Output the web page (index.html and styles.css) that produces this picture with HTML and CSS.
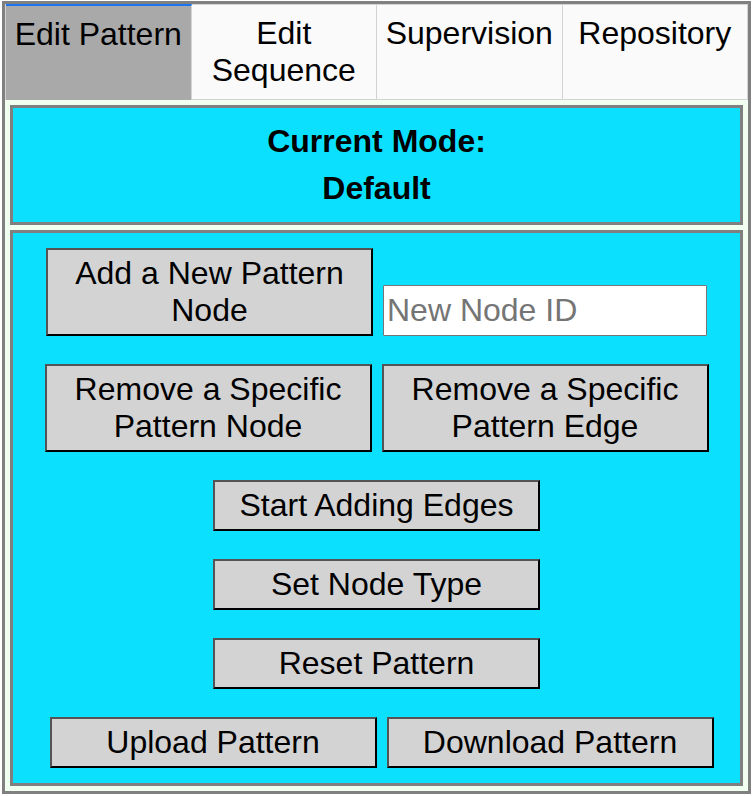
FILE: index.html
```html
<!DOCTYPE html>
<html lang="en">
<head>
<meta charset="utf-8">
<meta name="viewport" content="width=device-width, initial-scale=1">
<title>Pattern Editor</title>
<link rel="stylesheet" href="styles.css">
</head>
<body>
<main class="editor">
  <nav class="tabs">
    <button type="button" class="tab tab-active">Edit Pattern</button>
    <button type="button" class="tab">Edit Sequence</button>
    <button type="button" class="tab">Supervision</button>
    <button type="button" class="tab">Repository</button>
  </nav>
  <section class="panel mode">
    <p>Current Mode:</p>
    <p>Default</p>
  </section>
  <section class="panel actions">
    <div class="row row-end">
      <button type="button" class="action">Add a New Pattern Node</button>
      <input class="node-id" type="text" placeholder="New Node ID" aria-label="New Node ID">
    </div>
    <div class="row">
      <button type="button" class="action">Remove a Specific Pattern Node</button>
      <button type="button" class="action">Remove a Specific Pattern Edge</button>
    </div>
    <div class="row"><button type="button" class="action">Start Adding Edges</button></div>
    <div class="row"><button type="button" class="action">Set Node Type</button></div>
    <div class="row"><button type="button" class="action">Reset Pattern</button></div>
    <div class="row row-files">
      <button type="button" class="action">Upload Pattern</button>
      <button type="button" class="action">Download Pattern</button>
    </div>
  </section>
</main>
</body>
</html>
```
FILE: styles.css
```css
* {
  box-sizing: border-box;
}

body {
  margin: 0;
  padding: 1px 3px 2px 2px;
  background: #fff;
  color: #000;
  font-family: "Liberation Sans", Arial, sans-serif;
  font-size: 32px;
  line-height: 37px;
}

.editor {
  border: 3px solid gray;
  background: #f0fff0;
}

.tabs {
  display: grid;
  grid-template-columns: repeat(4, 1fr);
  border-left: 1px solid lightgray;
}

.tab {
  display: flex;
  justify-content: center;
  align-items: flex-start;
  min-height: 96px;
  margin: 0;
  padding: 10px 6px;
  border: 0 solid lightgray;
  border-width: 1px 1px 1px 0;
  background: #fafafa;
  color: inherit;
  font: inherit;
}

.tab-active {
  padding: 10px 0;
  border-width: 2px 1px 0 0;
  border-top-color: #1a73f0;
  background: darkgray;
}

.panel {
  margin: 5px;
  border: 3px solid gray;
  background: #0be1ff;
}

.mode {
  padding: 10px;
  font-weight: bold;
  line-height: 47px;
  text-align: center;
}

.mode p {
  margin: 0;
}

.actions {
  display: flex;
  flex-direction: column;
  gap: 28px;
  padding: 15px 10px;
}

.row {
  display: flex;
  justify-content: center;
  gap: 10px;
}

.row-end {
  align-items: flex-end;
}

.row-files {
  padding-left: 10px;
}

.action {
  width: 327px;
  margin: 0;
  padding: 5px 20px;
  border: 2px outset #000;
  background: lightgray;
  color: inherit;
  font: inherit;
}

.node-id {
  width: 324px;
  height: 51px;
  margin: 0;
  padding: 1px 3px;
  border: 1px solid #767676;
  border-radius: 1px;
  background: #fff;
  font: inherit;
}

.node-id::placeholder {
  color: #757575;
}
```
